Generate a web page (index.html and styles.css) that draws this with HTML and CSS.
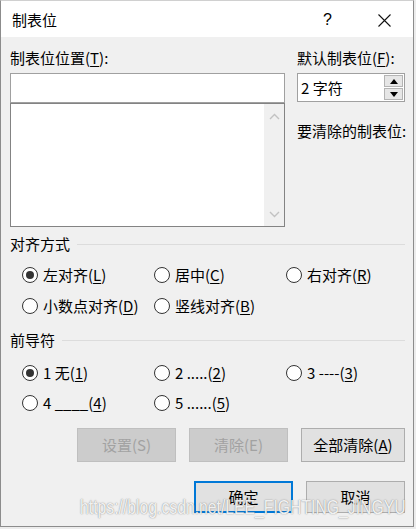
FILE: index.html
```html
<!DOCTYPE html>
<html>
<head>
<meta charset="utf-8">
<link rel="stylesheet" href="styles.css">
</head>
<body>
<div class="dialog">
  <div class="titlebar">
    <span class="title">制表位</span>
    <span class="help">?</span>
    <span class="close"><svg width="13" height="13" viewBox="0 0 13 13"><path d="M0.5 0.5L12.5 12.5M12.5 0.5L0.5 12.5" stroke="#111" stroke-width="1.1" fill="none"/></svg></span>
  </div>
  <div class="body">
    <div class="top">
      <div class="left">
        <div class="label">制表位位置(<u>T</u>):</div>
        <div class="input"></div>
        <div class="list">
          <div class="scroll">
            <svg width="11" height="7" viewBox="0 0 11 7"><path d="M1 6L5.5 1.5L10 6" stroke="#c2c2c2" stroke-width="1.4" fill="none"/></svg>
            <svg width="11" height="7" viewBox="0 0 11 7"><path d="M1 1L5.5 5.5L10 1" stroke="#c2c2c2" stroke-width="1.4" fill="none"/></svg>
          </div>
        </div>
      </div>
      <div class="right">
        <div class="label">默认制表位(<u>F</u>):</div>
        <div class="spin">
          <span class="spin-text">2&nbsp;字符</span>
          <div class="spin-btns">
            <div class="sbtn"><svg width="8" height="5" viewBox="0 0 8 5"><path d="M0 5L4 0L8 5Z" fill="#000"/></svg></div>
            <div class="sbtn"><svg width="8" height="5" viewBox="0 0 8 5"><path d="M0 0L4 5L8 0Z" fill="#000"/></svg></div>
          </div>
        </div>
        <div class="label clear-label">要清除的制表位:</div>
      </div>
    </div>

    <div class="group-head first"><span>对齐方式</span><span class="line"></span></div>
    <div class="radios">
      <div class="radio"><span class="circle checked"></span><span>左对齐(<u>L</u>)</span></div>
      <div class="radio"><span class="circle"></span><span>居中(<u>C</u>)</span></div>
      <div class="radio"><span class="circle"></span><span>右对齐(<u>R</u>)</span></div>
      <div class="radio"><span class="circle"></span><span>小数点对齐(<u>D</u>)</span></div>
      <div class="radio"><span class="circle"></span><span>竖线对齐(<u>B</u>)</span></div>
    </div>

    <div class="group-head second"><span>前导符</span><span class="line"></span></div>
    <div class="radios leaders">
      <div class="radio"><span class="circle checked"></span><span>1 无(<u>1</u>)</span></div>
      <div class="radio"><span class="circle"></span><span>2 .....(<u>2</u>)</span></div>
      <div class="radio"><span class="circle"></span><span>3 ----(<u>3</u>)</span></div>
      <div class="radio"><span class="circle"></span><span>4 ____(<u>4</u>)</span></div>
      <div class="radio"><span class="circle"></span><span>5 ......(<u>5</u>)</span></div>
    </div>

    <div class="btn-row">
      <div class="btn disabled">设置(S)</div>
      <div class="btn disabled">清除(E)</div>
      <div class="btn wide">全部清除(<u>A</u>)</div>
    </div>
    <div class="btn-row ok-row">
      <div class="btn default">确定</div>
      <div class="btn">取消</div>
    </div>
  </div>
  <div class="watermark">https://blog.csdn.net/LEE_FIGHTING_JINGYU</div>
</div>
</body>
</html>
```

FILE: styles.css
```css
html, body {
  margin: 0;
  padding: 0;
  background: #ececec;
}
body {
  font-family: "Noto Sans CJK SC", "Noto Sans", sans-serif;
  font-size: 15px;
  color: #000;
}
u { text-decoration: underline; text-underline-offset: 2px; text-decoration-thickness: 1px; }

.dialog {
  position: relative;
  width: 414px;
  height: 527px;
  box-sizing: border-box;
  border: 1px solid #8c8c8c;
  border-top-color: #d0d0d0;
  background: #f0f0f0;
  overflow: hidden;
}

.titlebar {
  height: 36px;
  background: #fff;
  display: flex;
  align-items: center;
  padding-left: 11px;
  padding-top: 2px;
  box-sizing: border-box;
}
.title { font-size: 15px; line-height: 20px; flex: 1; }
.help { font-size: 16px; line-height: 20px; width: 10px; margin-right: 45px; font-family: "Liberation Sans", sans-serif; }
.close { display: flex; width: 13px; margin-right: 22px; }

.body {
  padding: 11px 8px 0 9px;
}
.top {
  display: flex;
  gap: 12px;
}
.left { width: 275px; }
.right { width: 108px; }
.label { line-height: 20px; height: 20px; white-space: nowrap; }

.input {
  margin-top: 5px;
  height: 30px;
  box-sizing: border-box;
  border: 1px solid #a0a0a0;
  background: #fff;
}
.list {
  height: 124px;
  box-sizing: border-box;
  border: 1px solid #838383;
  background: #fff;
  display: flex;
  justify-content: flex-end;
}
.scroll {
  width: 20px;
  background: #f0f0f0;
  display: flex;
  flex-direction: column;
  justify-content: space-between;
  align-items: center;
  padding: 9px 0 8px;
  box-sizing: border-box;
}

.spin {
  margin-top: 5px;
  height: 29px;
  box-sizing: border-box;
  border: 1px solid #a0a0a0;
  background: #fff;
  display: flex;
  align-items: center;
  justify-content: space-between;
  padding: 1px 1px 1px 3px;
}
.spin-text { line-height: 20px; }
.spin-btns {
  display: flex;
  flex-direction: column;
  gap: 1px;
  align-self: stretch;
}
.sbtn {
  flex: 1;
  width: 19px;
  box-sizing: border-box;
  border: 1px solid #b4b4b4;
  background: #e6e6e6;
  display: flex;
  align-items: center;
  justify-content: center;
}
.clear-label { margin-top: 19px; }

.group-head {
  display: flex;
  align-items: center;
  gap: 7px;
  line-height: 20px;
  height: 20px;
}
.group-head.first { margin-top: 7px; }
.group-head.second { margin-top: 14px; }
.line { flex: 1; height: 1px; background: #dcdcdc; }

.radios {
  display: grid;
  grid-template-columns: 132px 132px auto;
  row-gap: 11px;
  padding-left: 12px;
  margin-top: 11px;
}
.radios.leaders { margin-top: 13px; row-gap: 10px; }
.radio {
  display: flex;
  align-items: center;
  gap: 5px;
  height: 20px;
  line-height: 20px;
  white-space: nowrap;
}
.circle {
  width: 16px;
  height: 16px;
  box-sizing: border-box;
  border: 1px solid #333;
  border-radius: 50%;
  background: #fff;
  display: flex;
  align-items: center;
  justify-content: center;
}
.circle.checked::after {
  content: "";
  width: 8px;
  height: 8px;
  border-radius: 50%;
  background: #333;
}

.btn-row {
  display: flex;
  justify-content: flex-end;
  gap: 13px;
  margin-top: 15px;
}
.ok-row { margin-top: 19px; }
.btn {
  width: 99px;
  height: 34px;
  box-sizing: border-box;
  border: 1px solid #adadad;
  background: #e1e1e1;
  display: flex;
  align-items: center;
  justify-content: center;
  line-height: 20px;
}
.btn.wide { width: 104px; }
.btn.disabled {
  background: #cccccc;
  border-color: #bfbfbf;
  color: #a2a2a2;
}
.ok-row .btn { height: 32px; }
.btn.default {
  border: 2px solid #0078d7;
}

.watermark {
  position: absolute;
  left: 79px;
  top: 494px;
  font-family: "Liberation Sans", sans-serif;
  font-size: 21px;
  line-height: 24px;
  color: rgba(255, 255, 255, 0.9);
  text-shadow: 0 0 1px rgba(90, 90, 90, 0.6), 0 0 2px rgba(120, 120, 120, 0.45);
  white-space: nowrap;
  transform-origin: left top;
  transform: scaleX(0.75);
}
```
